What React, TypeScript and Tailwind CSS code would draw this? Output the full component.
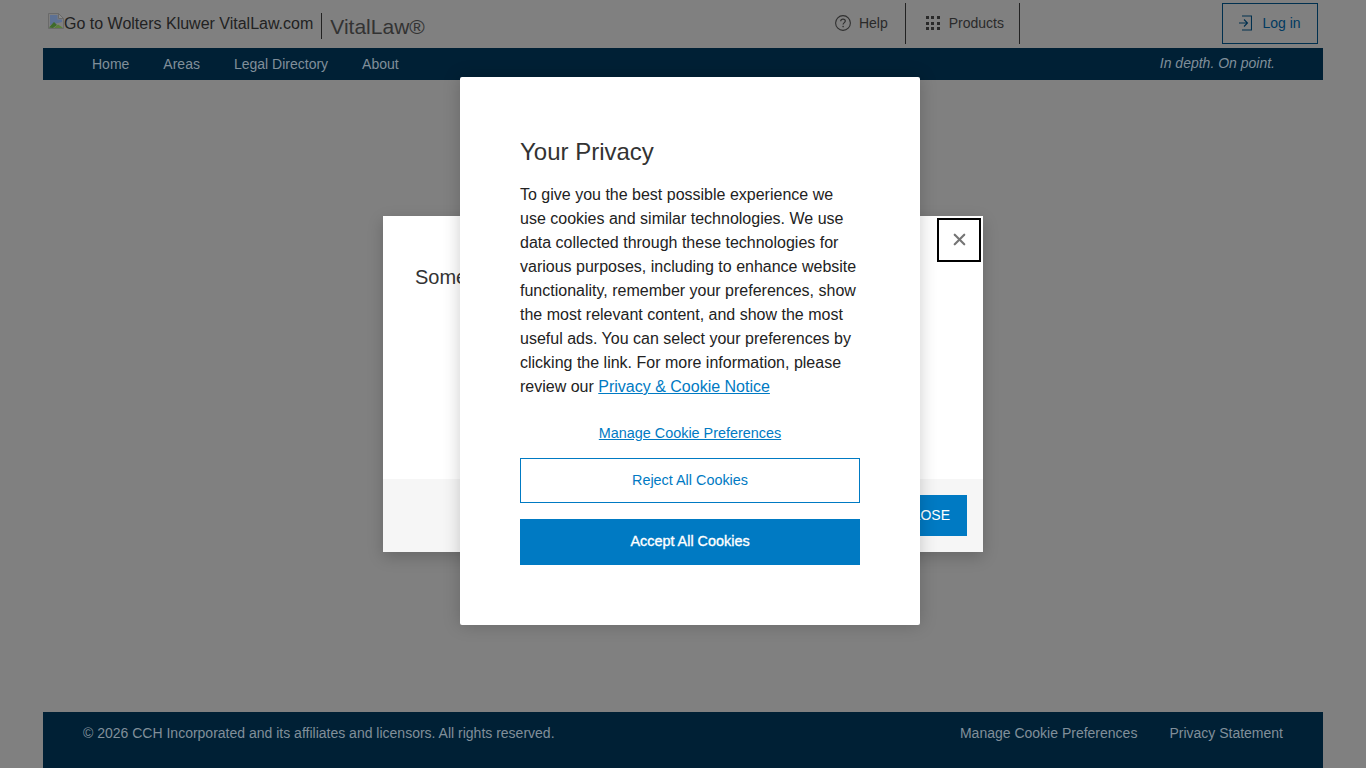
import { X } from "lucide-react";

const font = "font-['Liberation_Sans',Arial,sans-serif]";

function BrokenImage() {
  return (
    <svg width="16" height="16" viewBox="0 0 16 16" className="shrink-0">
      <path d="M0.5 0.5H10.5L15.5 5.5V15.5H0.5Z" fill="#7f7f7f" stroke="#6a6a6a" />
      <path d="M10.5 0.5V5.5H15.5Z" fill="#8a8a8a" stroke="#6a6a6a" />
      <path d="M2 2H9.5V6.5H14V9L2 12Z" fill="#5d7194" />
      <path d="M1 14.5L6 9L9 12L5 15Z" fill="#3f6b2b" />
      <path d="M6 15L10 11.5L14.5 14.5V15Z" fill="#5a7f3a" />
    </svg>
  );
}

function HelpIcon() {
  return (
    <svg width="16" height="16" viewBox="0 0 16 16" fill="none" stroke="#2f2f2f" className="shrink-0">
      <circle cx="8" cy="8" r="7.4" strokeWidth="1.1" />
      <path d="M5.7 6.2C5.8 4.9 6.8 4.2 8 4.2C9.3 4.2 10.3 5 10.3 6.1C10.3 7.6 8.1 7.7 8.1 9.6" strokeWidth="1.2" />
      <circle cx="8.1" cy="11.6" r="0.8" fill="#2f2f2f" stroke="none" />
    </svg>
  );
}

function LoginIcon() {
  return (
    <svg width="13" height="16" viewBox="0 0 13 16" fill="none" stroke="#00304f" strokeWidth="1.1" className="shrink-0">
      <path d="M3 1H12.5V15H3" />
      <path d="M0 8H8.5M5 4.5L8.5 8L5 11.5" />
    </svg>
  );
}

function Header() {
  return (
    <header className="flex h-12 items-start justify-between">
      <div className="flex items-start">
        <div className="ml-[5px] mt-[13px] flex h-[18px] items-start text-[16px] leading-[22px] text-[#222]">
          <BrokenImage />
          <span>Go to Wolters Kluwer VitalLaw.com</span>
        </div>
        <div className="ml-[8px] mt-[13px] h-[26px] w-px bg-[#222]" />
        <span className="ml-[8px] mt-[14px] text-[21px] leading-[26px] text-[#333]">VitalLaw®</span>
      </div>
      <div className="flex items-start">
        <div className="mt-[3px] flex h-[41px] items-center gap-[8px] pb-px pr-[17px] text-[14px] text-[#2a2a2a]">
          <span className="-mt-px">
            <HelpIcon />
          </span>
          <span>Help</span>
        </div>
        <div className="mt-[3px] h-[41px] w-px bg-[#222]" />
        <div className="mt-[3px] flex h-[41px] items-center pb-px pl-[20px] pr-[15px] text-[14px] text-[#2a2a2a]">
          <div className="grid grid-cols-3 gap-[2.5px]">
            {Array.from({ length: 9 }).map((_, i) => (
              <span key={i} className="size-[3px] bg-[#2a2a2a]" />
            ))}
          </div>
          <span className="ml-[9px]">Products</span>
        </div>
        <div className="mt-[3px] h-[41px] w-px bg-[#222]" />
        <button className="ml-[202px] mr-[5px] mt-[3px] flex h-[41px] w-[96px] items-center justify-center gap-[10px] border border-[#00304f] pb-px text-[14px] text-[#003a61]">
          <span className="-mt-px">
            <LoginIcon />
          </span>
          <span>Log in</span>
        </button>
      </div>
    </header>
  );
}

function NavBar() {
  return (
    <nav className="flex h-8 items-center justify-between bg-[#002035] pl-[49px] pr-[48px] text-[14px] text-[#808f9a]">
      <div className="flex gap-[34px]">
        <span>Home</span>
        <span>Areas</span>
        <span>Legal Directory</span>
        <span>About</span>
      </div>
      <span className="pb-[2px] italic">In depth. On point.</span>
    </nav>
  );
}

function Footer() {
  return (
    <footer className="flex h-[56px] items-start justify-between bg-[#002035] px-[40px] pt-[12px] text-[14px] leading-[18px] text-[#808f9a]">
      <span>© 2026 CCH Incorporated and its affiliates and licensors. All rights reserved.</span>
      <div className="flex gap-[32px]">
        <span>Manage Cookie Preferences</span>
        <span>Privacy Statement</span>
      </div>
    </footer>
  );
}

export default function App() {
  return (
    <div className={`relative h-[768px] w-[1366px] overflow-hidden bg-[#808080] ${font}`}>
      <div className="mx-[43px] flex h-full flex-col">
        <Header />
        <NavBar />
        <div className="flex-1" />
        <Footer />
      </div>

      {/* underlying dialog */}
      <div className="absolute left-[383px] top-[216px] flex h-[336px] w-[600px] flex-col bg-white shadow-[0_5px_15px_rgba(0,0,0,0.2)]">
        <div className="relative flex-1 px-[32px] pt-[49px] text-[20px] leading-[24px] text-[#333]">
          Some
          <button className="absolute right-[2px] top-[2px] flex size-[44px] items-center justify-center border-2 border-black pb-px text-[#757575]">
            <X size={19} strokeWidth={2.75} />
          </button>
        </div>
        <div className="flex h-[73px] items-start justify-end bg-[#f6f6f6] pr-[16px] pt-[16px]">
          <button className="flex h-[41px] w-[100px] items-center justify-end bg-[#007ac3] pr-[17px] text-[14px] text-white">
            CLOSE
          </button>
        </div>
      </div>

      {/* cookie banner */}
      <div className="absolute left-[460px] top-[77px] flex h-[548px] w-[460px] flex-col rounded-[2px] bg-white px-[60px] pt-[60px] shadow-[0_0_18px_rgba(0,0,0,0.2)]">
        <h2 className="text-[24px] leading-[29px] text-[#333]">Your Privacy</h2>
        <p className="mt-[17px] text-[16px] leading-[24px] text-[#222]">
          To give you the best possible experience we use cookies and similar technologies. We use data collected
          through these technologies for various purposes, including to enhance website functionality, remember your
          preferences, show the most relevant content, and show the most useful ads. You can select your preferences
          by clicking the link. For more information, please review our{" "}
          <a className="text-[#007ac3] underline">Privacy &amp; Cookie Notice</a>
        </p>
        <a className="mt-[24px] text-center text-[14.4px] leading-[20px] text-[#007ac3] underline">
          Manage Cookie Preferences
        </a>
        <button className="mt-[15px] h-[45px] w-full border border-[#007ac3] text-[14.4px] text-[#007ac3]">
          Reject All Cookies
        </button>
        <button className="mt-[16px] h-[46px] w-full bg-[#007ac3] pb-px text-[14.4px] text-white [-webkit-text-stroke:0.35px_white]">
          Accept All Cookies
        </button>
      </div>
    </div>
  );
}
